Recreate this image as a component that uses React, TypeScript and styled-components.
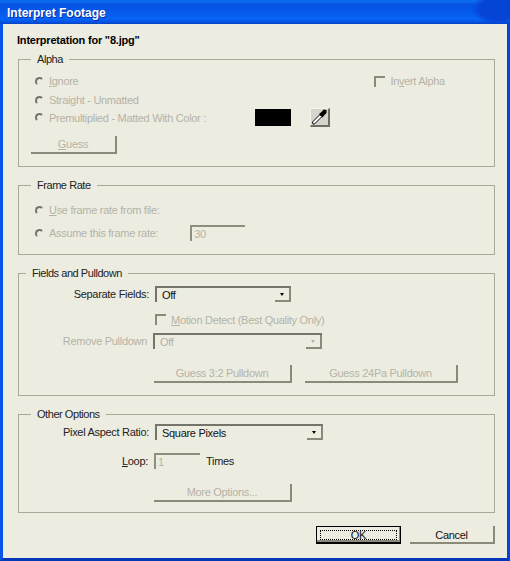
import * as React from 'react';
import styled, { createGlobalStyle, css } from 'styled-components';

const disabledText = '#b4b3a6';
const shadow = '#8b8979';
const face = '#edece1';

const GlobalStyle = createGlobalStyle`
  html, body {
    margin: 0;
    padding: 0;
    background: ${face};
  }
  body {
    font-family: "Liberation Sans", Arial, sans-serif;
    font-size: 11px;
    letter-spacing: -0.3px;
    color: #111;
  }
  u {
    text-underline-offset: 1px;
  }
`;

const Window = styled.div`
  width: 510px;
  height: 561px;
  display: flex;
  flex-direction: column;
  overflow: hidden;
`;

const TitleBar = styled.div`
  height: 24px;
  flex: none;
  box-sizing: border-box;
  padding: 1px 0 0 7px;
  display: flex;
  align-items: center;
  color: #fff;
  font-size: 12px;
  letter-spacing: 0;
  font-weight: bold;
  text-shadow: 1px 1px 0 #0a2fa8;
  background:
    radial-gradient(ellipse 26px 16px at 498px 9px, #0644d6 70%, transparent 100%),
    linear-gradient(#0a6af0 0, #0a6af0 2px, #0653e2 4px, #0558ea 12px, #0763f6 19px, #0554e2 22px, #0340c4 24px);
`;

const Body = styled.div`
  flex: 1;
  box-sizing: border-box;
  background: ${face};
  border-left: 3px solid #0854e6;
  border-right: 3px solid #0645d8;
  border-bottom: 3px solid #0538b8;
  padding: 0 12px 0 15px;
  display: flex;
  flex-direction: column;
`;

const Heading = styled.div`
  height: 35px;
  flex: none;
  box-sizing: border-box;
  padding: 9px 0 0 0;
  margin-left: -1px;
  font-size: 11px;
  line-height: 14px;
  font-weight: bold;
  letter-spacing: -0.2px;
  color: #000;
`;

const Group = styled.div<{ $height: number }>`
  position: relative;
  flex: none;
  box-sizing: border-box;
  height: ${(p) => p.$height}px;
  margin-bottom: 18px;
  border: 1px solid #aaa998;
  padding-top: 1px;
`;

const Legend = styled.div<{ $left?: number }>`
  position: absolute;
  top: -8px;
  left: ${(p) => p.$left ?? 12}px;
  padding: 0 6px;
  background: ${face};
  line-height: 14px;
  font-size: 11px;
  letter-spacing: -0.45px;
  color: #222;
`;

const Row = styled.div<{ $top?: number; $height?: number; $left?: number }>`
  display: flex;
  align-items: center;
  height: ${(p) => p.$height ?? 16}px;
  margin-top: ${(p) => p.$top ?? 0}px;
  padding-left: ${(p) => p.$left ?? 0}px;
`;

const Label = styled.span<{ $disabled?: boolean; $width?: number; $left?: number }>`
  color: ${(p) => (p.$disabled ? disabledText : '#222')};
  white-space: nowrap;
  margin-left: ${(p) => p.$left ?? 0}px;
  ${(p) =>
    p.$width !== undefined &&
    css`
      width: ${p.$width}px;
      flex: none;
      text-align: right;
      box-sizing: border-box;
      padding-right: 6px;
    `}
`;

const Radio = styled.span`
  flex: none;
  display: block;
  width: 9px;
  height: 9px;
  box-sizing: border-box;
  margin-right: 5px;
  border-radius: 50%;
  border: 2px solid;
  border-color: #75736a transparent transparent #75736a;
`;

const Check = styled.span<{ $left?: number }>`
  flex: none;
  display: block;
  width: 11px;
  height: 11px;
  box-sizing: border-box;
  margin-left: ${(p) => p.$left ?? 0}px;
  margin-right: 5px;
  border-top: 2px solid ${shadow};
  border-left: 2px solid ${shadow};
`;

const PushButton = styled.div<{ $width: number; $disabled?: boolean; $left?: number }>`
  flex: none;
  box-sizing: border-box;
  width: ${(p) => p.$width}px;
  height: 18px;
  margin-left: ${(p) => p.$left ?? 0}px;
  display: flex;
  align-items: center;
  justify-content: center;
  border-right: 2px solid ${shadow};
  border-bottom: 2px solid ${shadow};
  color: ${(p) => (p.$disabled ? disabledText : '#111')};
  white-space: nowrap;
`;

const DefaultButton = styled(PushButton)`
  position: relative;
  border: 1px solid #000;
  border-bottom: 2px solid #000;
  box-shadow: inset -1px -2px 0 #8b8979;
`;

const FocusRing = styled.span`
  position: absolute;
  inset: 3px 3px 2px 3px;
  border: 1px dotted #000;
`;

const Select = styled.div<{ $width: number; $disabled?: boolean; $left?: number }>`
  flex: none;
  box-sizing: border-box;
  width: ${(p) => p.$width}px;
  height: 16px;
  margin-left: ${(p) => p.$left ?? 0}px;
  padding-left: 5px;
  display: flex;
  align-items: center;
  justify-content: space-between;
  border-top: 2px solid #76746a;
  border-left: 2px solid #76746a;
  color: ${(p) => (p.$disabled ? disabledText : '#111')};
`;

const SelectArrow = styled.span<{ $disabled?: boolean }>`
  flex: none;
  width: 16px;
  height: 14px;
  box-sizing: border-box;
  border-right: 2px solid ${shadow};
  border-bottom: 2px solid ${shadow};
  display: flex;
  align-items: center;
  justify-content: center;
  &::after {
    content: '';
    display: block;
    margin-top: 1px;
    border-left: 2.5px solid transparent;
    border-right: 2.5px solid transparent;
    border-top: 3px solid ${(p) => (p.$disabled ? disabledText : '#000')};
  }
`;

const NumberField = styled.div<{ $width: number; $left?: number }>`
  flex: none;
  box-sizing: border-box;
  width: ${(p) => p.$width}px;
  height: 16px;
  margin-left: ${(p) => p.$left ?? 0}px;
  padding-left: 2px;
  display: flex;
  align-items: center;
  border-top: 2px solid #8f8d7e;
  border-left: 2px solid #8f8d7e;
  color: ${disabledText};
`;

const Swatch = styled.div<{ $left: number }>`
  flex: none;
  width: 36px;
  height: 17px;
  margin-left: ${(p) => p.$left}px;
  background: #000;
`;

const PipetteButton = styled.div`
  flex: none;
  box-sizing: border-box;
  width: 20px;
  height: 19px;
  margin-left: 19px;
  background: #d6d4cb;
  border-right: 2px solid #6f6d62;
  border-bottom: 2px solid #6f6d62;
  border-top: 1px solid #f4f3ec;
  border-left: 1px solid #f4f3ec;
  display: flex;
`;

const Footer = styled.div`
  display: flex;
  justify-content: flex-end;
  gap: 9px;
  margin-top: -5px;
  & > div {
    padding-top: 1px;
  }
`;

const Pipette = () => (
  <svg width="17" height="16" viewBox="0 0 17 16">
    <path d="M2 15 L1.5 13 L9 5.5 L11 7.5 L3.5 15 Z" fill="#fff" stroke="#000" strokeWidth="1" />
    <path d="M8 5 L11 2.5 L12.5 0.5 L15.5 1 L15.5 4 L13.5 6 L11.5 8.5 Z" fill="#000" />
  </svg>
);

export default function App() {
  return (
    <Window>
      <GlobalStyle />
      <TitleBar>Interpret Footage</TitleBar>
      <Body>
        <Heading>Interpretation for "8.jpg"</Heading>

        <Group $height={108}>
          <Legend>Alpha</Legend>
          <Row $top={12} $left={16}>
            <Radio />
            <Label $disabled>
              <u>I</u>gnore
            </Label>
            <Check $left={296} />
            <Label $disabled>
              In<u>v</u>ert Alpha
            </Label>
          </Row>
          <Row $top={3} $left={16}>
            <Radio />
            <Label $disabled>Straight - Unmatted</Label>
          </Row>
          <Row $left={16} $height={19}>
            <Radio />
            <Label $disabled>Premultiplied - Matted With Color :</Label>
            <Swatch $left={49} />
            <PipetteButton>
              <Pipette />
            </PipetteButton>
          </Row>
          <Row $top={9} $left={12} $height={18}>
            <PushButton $width={86} $disabled>
              <span>
                <u>G</u>uess
              </span>
            </PushButton>
          </Row>
        </Group>

        <Group $height={70}>
          <Legend>Frame Rate</Legend>
          <Row $top={15} $left={16}>
            <Radio />
            <Label $disabled>
              <u>U</u>se frame rate from file:
            </Label>
          </Row>
          <Row $top={7} $left={16}>
            <Radio />
            <Label $disabled>Assume this frame rate:</Label>
            <NumberField $width={55} $left={32}>30</NumberField>
          </Row>
        </Group>

        <Group $height={123}>
          <Legend $left={7}>Fields and Pulldown</Legend>
          <Row $top={11}>
            <Label $width={136}>Separate Fields:</Label>
            <Select $width={136}>
              Off
              <SelectArrow />
            </Select>
          </Row>
          <Row $top={11} $height={13} $left={136}>
            <Check />
            <Label $disabled>
              <u>M</u>otion Detect (Best Quality Only)
            </Label>
          </Row>
          <Row $top={7}>
            <Label $width={134} $disabled>Remove Pulldown</Label>
            <Select $width={169} $disabled>
              Off
              <SelectArrow $disabled />
            </Select>
          </Row>
          <Row $top={16} $height={18} $left={135}>
            <PushButton $width={138} $disabled>Guess 3:2 Pulldown</PushButton>
            <PushButton $width={153} $left={13} $disabled>Guess 24Pa Pulldown</PushButton>
          </Row>
        </Group>

        <Group $height={99}>
          <Legend>Other Options</Legend>
          <Row $top={8}>
            <Label $width={136}>Pixel Aspect Ratio:</Label>
            <Select $width={168}>
              Square Pixels
              <SelectArrow />
            </Select>
          </Row>
          <Row $top={13}>
            <Label $width={135}>
              <u>L</u>oop:
            </Label>
            <NumberField $width={46}>1</NumberField>
            <Label $left={6}>Times</Label>
          </Row>
          <Row $top={15} $height={17} $left={135}>
            <PushButton $width={138} $disabled>More Options...</PushButton>
          </Row>
        </Group>

        <Footer>
          <DefaultButton $width={85}>
            <FocusRing />
            OK
          </DefaultButton>
          <PushButton $width={85}>Cancel</PushButton>
        </Footer>
      </Body>
    </Window>
  );
}
